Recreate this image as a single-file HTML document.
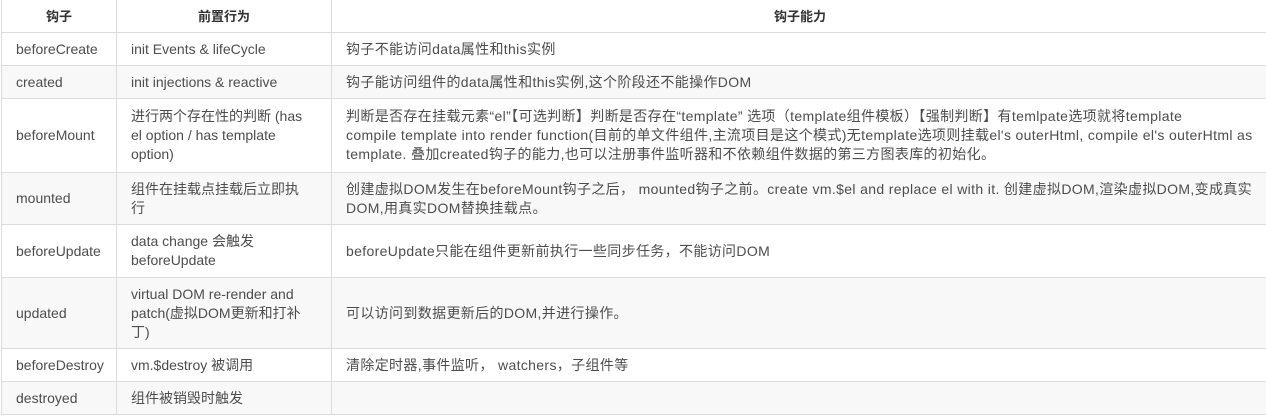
<!DOCTYPE html>
<html><head><meta charset="utf-8"><style>
body{margin:0;background:#fff;width:1266px;height:418px;overflow:hidden}
table{position:absolute;left:1px;top:-1px;border-collapse:collapse;table-layout:fixed;width:1268px;font-family:"Liberation Sans","Noto Sans CJK SC",sans-serif;font-size:14px;color:#4d4d4d}
td,th{border:1px solid #dcdcdc;padding:0 0 0 14px;line-height:19px;white-space:nowrap;overflow:hidden;text-align:left}
td.c{letter-spacing:0.35px}
th{text-align:center;font-weight:bold;color:#333;padding:0;font-size:13px}
tr.g td{background:#f8f8f8}
</style></head><body>
<table>
<col style="width:115px"><col style="width:215px"><col>
<tr style="height:33px"><th>钩子</th><th>前置行为</th><th>钩子能力</th></tr>
<tr style="height:33px"><td>beforeCreate</td><td>init Events &amp; lifeCycle</td><td class="c">钩子不能访问data属性和this实例</td></tr>
<tr class="g" style="height:33px"><td>created</td><td>init injections &amp; reactive</td><td class="c">钩子能访问组件的data属性和this实例,这个阶段还不能操作DOM</td></tr>
<tr style="height:74px"><td>beforeMount</td><td>进行两个存在性的判断 (has<br>el option / has template<br>option)</td><td class="c">判断是否存在挂载元素“el”【可选判断】判断是否存在“template” 选项（template组件模板）【强制判断】有temlpate选项就将template<br>compile template into render function(目前的单文件组件,主流项目是这个模式)无template选项则挂载el's outerHtml, compile el's outerHtml as<br>template. 叠加created钩子的能力,也可以注册事件监听器和不依赖组件数据的第三方图表库的初始化。</td></tr>
<tr class="g" style="height:52px"><td>mounted</td><td>组件在挂载点挂载后立即执<br>行</td><td class="c">创建虚拟DOM发生在beforeMount钩子之后， mounted钩子之前。create vm.$el and replace el with it. 创建虚拟DOM,渲染虚拟DOM,变成真实<br>DOM,用真实DOM替换挂载点。</td></tr>
<tr style="height:53px"><td>beforeUpdate</td><td>data change 会触发<br>beforeUpdate</td><td class="c">beforeUpdate只能在组件更新前执行一些同步任务，不能访问DOM</td></tr>
<tr class="g" style="height:71px"><td>updated</td><td>virtual DOM re-render and<br>patch(虚拟DOM更新和打补<br>丁)</td><td class="c">可以访问到数据更新后的DOM,并进行操作。</td></tr>
<tr style="height:33px"><td>beforeDestroy</td><td>vm.$destroy 被调用</td><td class="c">清除定时器,事件监听， watchers，子组件等</td></tr>
<tr class="g" style="height:33px"><td>destroyed</td><td>组件被销毁时触发</td><td class="c"></td></tr>
</table>
</body></html>
